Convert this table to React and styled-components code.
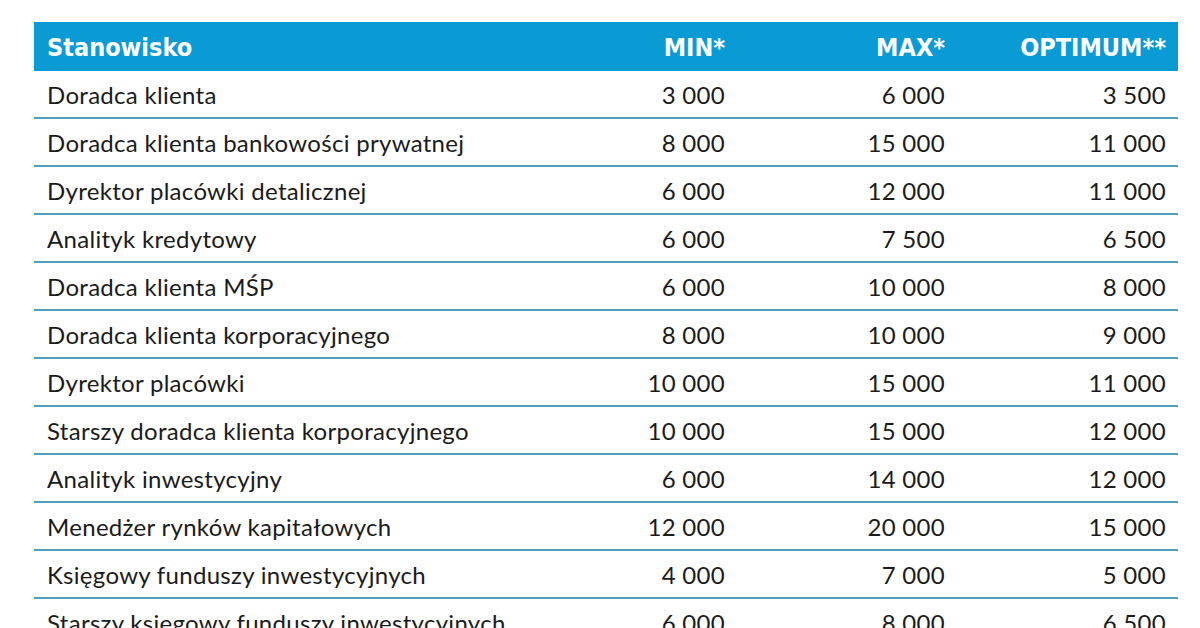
import styled, { createGlobalStyle } from "styled-components";

const GlobalStyle = createGlobalStyle`
  html, body {
    margin: 0;
    padding: 0;
    background: #fff;
  }
  body {
    font-family: Lato, "Noto Sans", sans-serif;
    color: #1b1b1b;
  }
`;

const rows = [
  ["Doradca klienta", "3 000", "6 000", "3 500"],
  ["Doradca klienta bankowości prywatnej", "8 000", "15 000", "11 000"],
  ["Dyrektor placówki detalicznej", "6 000", "12 000", "11 000"],
  ["Analityk kredytowy", "6 000", "7 500", "6 500"],
  ["Doradca klienta MŚP", "6 000", "10 000", "8 000"],
  ["Doradca klienta korporacyjnego", "8 000", "10 000", "9 000"],
  ["Dyrektor placówki", "10 000", "15 000", "11 000"],
  ["Starszy doradca klienta korporacyjnego", "10 000", "15 000", "12 000"],
  ["Analityk inwestycyjny", "6 000", "14 000", "12 000"],
  ["Menedżer rynków kapitałowych", "12 000", "20 000", "15 000"],
  ["Księgowy funduszy inwestycyjnych", "4 000", "7 000", "5 000"],
  ["Starszy księgowy funduszy inwestycyjnych", "6 000", "8 000", "6 500"],
];

const Page = styled.div`
  padding: 22px 22px 0 34px;
  height: 628px;
  box-sizing: border-box;
  overflow: hidden;
`;

const Table = styled.div`
  display: flex;
  flex-direction: column;
  width: 1144px;
`;

const cols = `
  display: grid;
  grid-template-columns: 1fr 180px 220px 221px;
  align-items: center;
  padding: 0 12px 0 13px;
`;

const HeaderRow = styled.div`
  ${cols}
  height: 49px;
  background: #0a9bd5;
  color: #fff;
  font-family: "DejaVu Sans Condensed", "DejaVu Sans", sans-serif;
  font-stretch: condensed;
  font-weight: 700;
  font-size: 25px;
`;

const HeadCell = styled.div`
  text-align: ${(p) => (p.$left ? "left" : "right")};
  padding-top: 1px;
`;

const Row = styled.div`
  ${cols}
  height: 46px;
  border-bottom: 2px solid #4aa0bd;
  font-size: 24px;
  font-weight: 400;
`;

const Cell = styled.div`
  text-align: ${(p) => (p.$left ? "left" : "right")};
  white-space: nowrap;
  letter-spacing: 0.3px;
`;

export default function App() {
  return (
    <Page>
      <GlobalStyle />
      <Table>
        <HeaderRow>
          <HeadCell $left>Stanowisko</HeadCell>
          <HeadCell>MIN*</HeadCell>
          <HeadCell>MAX*</HeadCell>
          <HeadCell>OPTIMUM**</HeadCell>
        </HeaderRow>
        {rows.map((r) => (
          <Row key={r[0]}>
            <Cell $left>{r[0]}</Cell>
            <Cell>{r[1]}</Cell>
            <Cell>{r[2]}</Cell>
            <Cell>{r[3]}</Cell>
          </Row>
        ))}
      </Table>
    </Page>
  );
}
